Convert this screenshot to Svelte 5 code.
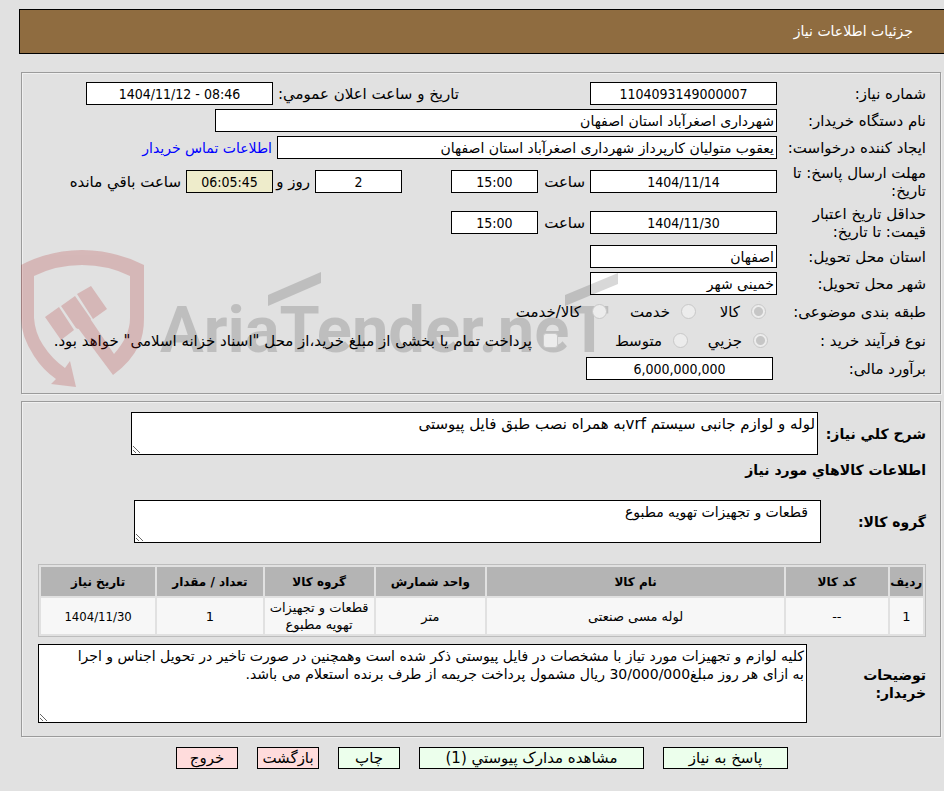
<script>
  const columns = [
    { title: 'ردیف', width: 34 },
    { title: 'کد کالا', width: 103 },
    { title: 'نام کالا', width: 302 },
    { title: 'واحد شمارش', width: 111 },
    { title: 'گروه کالا', width: 111 },
    { title: 'تعداد / مقدار', width: 107 },
    { title: 'تاریخ نیاز', width: 116, numeric: true },
  ];
  const rows = [
    ['1', '--', 'لوله مسی صنعتی', 'متر', 'قطعات و تجهیزات تهویه مطبوع', '1', '1404/11/30'],
  ];
  const actions = [
    { text: 'پاسخ به نیاز', size: 'medium', tone: 'green' },
    { text: 'مشاهده مدارک پيوستي (1)', size: 'large', tone: 'green' },
    { text: 'چاپ', size: 'small', tone: 'green' },
    { text: 'بازگشت', size: 'small', tone: 'red' },
    { text: 'خروج', size: 'small', tone: 'red' },
  ];
  const summary = 'لوله و لوازم جانبی سیستم vrfبه همراه نصب طبق فایل پیوستی';
  const group = 'قطعات و تجهیزات تهویه مطبوع';
  const note =
    'کلیه لوازم و تجهیزات مورد تیاز با مشخصات در فایل پیوستی ذکر شده است وهمچنین در صورت تاخیر در تحویل اجناس و اجرا به ازای هر روز مبلغ30/000/000 ریال مشمول پرداخت جریمه از طرف برنده استعلام می باشد.';
</script>

<div class="page" dir="rtl">
  <header>جزئیات اطلاعات نیاز</header>

  <fieldset class="details">
    <div class="row">
      <label class="name" for="number">شماره نیاز:</label>
      <input id="number" class="w187 num" value="1104093149000007" readonly />
      <label class="announce" for="announce">تاریخ و ساعت اعلان عمومي:</label>
      <input id="announce" class="w187 num" value="1404/11/12 - 08:46" readonly />
    </div>
    <div class="row">
      <label class="name" for="org">نام دستگاه خریدار:</label>
      <input id="org" class="w562" value="شهرداری اصغرآباد استان اصفهان" readonly />
    </div>
    <div class="row">
      <label class="name" for="creator">ایجاد کننده درخواست:</label>
      <input id="creator" class="w500" value="یعقوب متولیان کارپرداز شهرداری اصغرآباد استان اصفهان" readonly />
      <a href="#contact">اطلاعات تماس خریدار</a>
    </div>
    <div class="row tall">
      <label class="name" for="deadline">مهلت ارسال پاسخ: تا تاریخ:</label>
      <input id="deadline" class="w187 num" value="1404/11/14" readonly />
      <label class="hour" for="deadline-hour">ساعت</label>
      <input id="deadline-hour" class="w87 num" value="15:00" readonly />
      <input class="w87 num days" aria-label="روز" value="2" readonly />
      <label class="and" for="left">روز و</label>
      <input id="left" class="w87 num timer" value="06:05:45" readonly />
      <span class="after">ساعت باقي مانده</span>
    </div>
    <div class="row tall">
      <label class="name" for="valid">حداقل تاریخ اعتبار قیمت: تا تاریخ:</label>
      <input id="valid" class="w187 num" value="1404/11/30" readonly />
      <label class="hour" for="valid-hour">ساعت</label>
      <input id="valid-hour" class="w87 num" value="15:00" readonly />
    </div>
    <div class="row">
      <label class="name" for="province">استان محل تحویل:</label>
      <input id="province" class="w187" value="اصفهان" readonly />
    </div>
    <div class="row">
      <label class="name" for="city">شهر محل تحویل:</label>
      <input id="city" class="w187" value="خمینی شهر" readonly />
    </div>
    <div class="row choice">
      <span class="name">طبقه بندی موضوعی:</span>
      <label class="option opt-a"><input type="radio" name="kind" checked disabled />کالا</label>
      <label class="option opt-b"><input type="radio" name="kind" disabled />خدمت</label>
      <label class="option"><input type="radio" name="kind" disabled />کالا/خدمت</label>
    </div>
    <div class="row choice">
      <span class="name">نوع فرآیند خرید :</span>
      <label class="option opt-a"><input type="radio" name="process" checked disabled />جزیي</label>
      <label class="option opt-c"><input type="radio" name="process" disabled />متوسط</label>
      <label class="option"><input type="checkbox" disabled />پرداخت تمام یا بخشی از مبلغ خرید،از محل "اسناد خزانه اسلامی" خواهد بود.</label>
    </div>
    <div class="row">
      <label class="name" for="estimate">برآورد مالی:</label>
      <input id="estimate" class="w187 num inset" value="6,000,000,000" readonly />
    </div>
  </fieldset>

  <fieldset class="goods">
    <div class="block summary">
      <label for="summary">شرح كلي نياز:</label>
      <textarea id="summary" readonly value={summary}></textarea>
    </div>
    <h2>اطلاعات كالاهاي مورد نياز</h2>
    <div class="block group">
      <label for="group">گروه كالا:</label>
      <textarea id="group" readonly value={group}></textarea>
    </div>
    <table>
      <colgroup>
        {#each columns as c}<col style="width: {(c.width / 884) * 100}%" />{/each}
      </colgroup>
      <thead>
        <tr>{#each columns as c}<th scope="col">{c.title}</th>{/each}</tr>
      </thead>
      <tbody>
        {#each rows as row}
          <tr>{#each row as cell, i}<td class:digits={columns[i].numeric}>{cell}</td>{/each}</tr>
        {/each}
      </tbody>
    </table>
    <div class="block note">
      <label for="note">توضیحات خریدار:</label>
      <textarea id="note" readonly value={note}></textarea>
    </div>
  </fieldset>

  <div class="actions">
    {#each actions as a}
      <button type="button" class="{a.size} {a.tone}">{a.text}</button>
    {/each}
  </div>

  <svg class="watermark" width="600" height="142" viewBox="20 248 600 142" direction="ltr" aria-hidden="true">
    <g fill="#aa1414" opacity=".2">
      <path fill-rule="evenodd" d="M21 265Q50 250 82 250Q114 250 144 265V318Q144 334 139 345Q131 362 113 375L78 328L86 319L91 320L114 354Q130 336 130 318V276Q108 265 82 265Q56 265 34 276V318Q35 333 43 345Q52 359 65 368L70 361L76 387L51 384L56 379Q43 370 34 356Q21 336 21 318Z" />
      <path d="M45 317L59 307L74 330L61 340ZM61 306L75 296L91 319L90 322L78 329L76 328ZM77 294L91 286L107 309L93 319Z" />
    </g>
    <g opacity=".15">
      <path d="M268 295L321 272V283L268 306ZM565 295L618 273V284L565 306Z" />
      <text class="brand" x="160" y="352">AriaTender.neT</text>
    </g>
  </svg>
</div>

<style>
  :global(body) {
    background: #e1e1e1;
  }
  .page {
    position: relative;
    padding-top: 9px;
    color: #000;
    font: 14px/18px 'DejaVu Sans', sans-serif;
  }
  .page * {
    box-sizing: border-box;
  }
  header {
    margin-left: 19px;
    height: 45px;
    padding: 0 31px;
    border: 1px solid #000;
    border-right: 0;
    background: #8f6c40;
    color: #fff;
    line-height: 43px;
  }
  fieldset {
    min-width: 0;
    margin: 0 3px 0 21px;
    border: 1px solid #9b9b9b;
    box-shadow:
      1px 1px 0 #f0f0f0,
      inset 1px 1px 0 #f0f0f0;
  }
  .details {
    margin-top: 18px;
    padding: 7px 14px 11px 0;
  }
  .goods {
    margin-top: 7px;
    padding: 10px 14px 13px 16px;
  }
  .row {
    display: flex;
    align-items: center;
    height: 27px;
    white-space: nowrap;
  }
  .row label,
  .row span {
    font-size: 15px;
  }
  .row.tall {
    height: 41px;
  }
  .row.choice {
    height: 29px;
  }
  .name {
    flex: none;
    width: 149px;
    padding-left: 10px;
  }
  .tall .name {
    white-space: normal;
  }
  input,
  textarea {
    margin: 0;
    border: 1px solid #000;
    border-radius: 0;
    background: #fff;
    color: #000;
    font: inherit;
    outline: 0;
  }
  .row > input {
    height: 23px;
    padding: 0 2px;
  }
  .row .num {
    text-align: center;
    direction: ltr;
    font-family: 'DejaVu Sans Condensed', 'DejaVu Sans', sans-serif;
  }
  .w187 {
    width: 187px;
  }
  .w87 {
    width: 87px;
  }
  .w500 {
    width: 500px;
  }
  .w562 {
    width: 562px;
  }
  .announce {
    width: 186px;
    margin-right: 131px;
  }
  .hour {
    width: 52px;
    padding-right: 5px;
  }
  .days {
    margin-right: 49px;
  }
  .and {
    width: 42px;
    padding-right: 5px;
  }
  .row .timer {
    background: #eeeccb;
  }
  .after,
  a {
    padding-right: 5px;
  }
  a {
    color: #00f;
    text-decoration: none;
  }
  .inset {
    margin-right: 4px;
  }
  .option {
    display: flex;
    align-items: center;
    gap: 11px;
  }
  .opt-a {
    width: 70px;
    margin-right: 11px;
  }
  .opt-b {
    width: 89px;
  }
  .choice .opt-c {
    width: 130px;
  }
  .choice + .choice .opt-a {
    width: 80px;
    margin-right: 9px;
  }
  .option input {
    position: relative;
    z-index: 1;
    flex: none;
    width: 15px;
    height: 15px;
    appearance: none;
    border: 1px solid #c8c8c8;
    border-radius: 50%;
    background: #ececec;
  }
  .option input[type='checkbox'] {
    border-radius: 3px;
  }
  .option input:checked {
    background: radial-gradient(circle, #c6c6c6 4px, #ececec 5px);
  }
  .block {
    display: flex;
    align-items: center;
  }
  .block label,
  h2 {
    font-weight: bold;
    font-size: 14px;
  }
  textarea {
    display: block;
    flex: 1;
    min-width: 0;
    height: 43px;
    padding: 2px;
    line-height: 18px;
    overflow: hidden;
    resize: both;
  }
  .summary label {
    width: 108px;
    white-space: nowrap;
  }
  .summary textarea {
    margin-left: 93px;
    font-size: 15px;
  }
  h2 {
    margin: 6px 0 21px;
    line-height: 18px;
  }
  .group label {
    width: 105px;
  }
  .group textarea {
    margin-left: 96px;
    padding-right: 12px;
  }
  table {
    width: 100%;
    margin: 21px 0 7px;
    table-layout: fixed;
    border: 1px solid #bdbdbd;
    border-spacing: 2px;
    text-align: center;
  }
  th {
    height: 29px;
    padding: 0;
    background: #b4b4b4;
    font-size: 12px;
  }
  td {
    height: 36px;
    padding: 0 2px;
    background: #f7f7f7;
    font-size: 13px;
    line-height: 17px;
  }
  .digits {
    font-family: 'DejaVu Sans Condensed', 'DejaVu Sans', sans-serif;
  }
  .note label {
    width: 119px;
    padding-left: 50px;
  }
  .note textarea {
    height: 79px;
    padding-left: 32px;
  }
  .actions {
    display: flex;
    justify-content: center;
    gap: 19px;
    margin: 10px 2px 0 22px;
    padding-bottom: 20px;
  }
  button {
    height: 22px;
    padding: 0;
    border: 1px solid #000;
    border-radius: 0;
    color: #000;
    font: inherit;
    font-size: 15px;
  }
  .small {
    width: 62px;
  }
  .medium {
    width: 125px;
  }
  .large {
    width: 225px;
  }
  .green {
    background: #ecffec;
  }
  .red {
    background: #ffdcdc;
  }
  .watermark {
    position: absolute;
    top: 248px;
    left: 20px;
    pointer-events: none;
  }
  .brand {
    font: bold 65px Roboto, sans-serif;
    direction: ltr;
  }
</style>
